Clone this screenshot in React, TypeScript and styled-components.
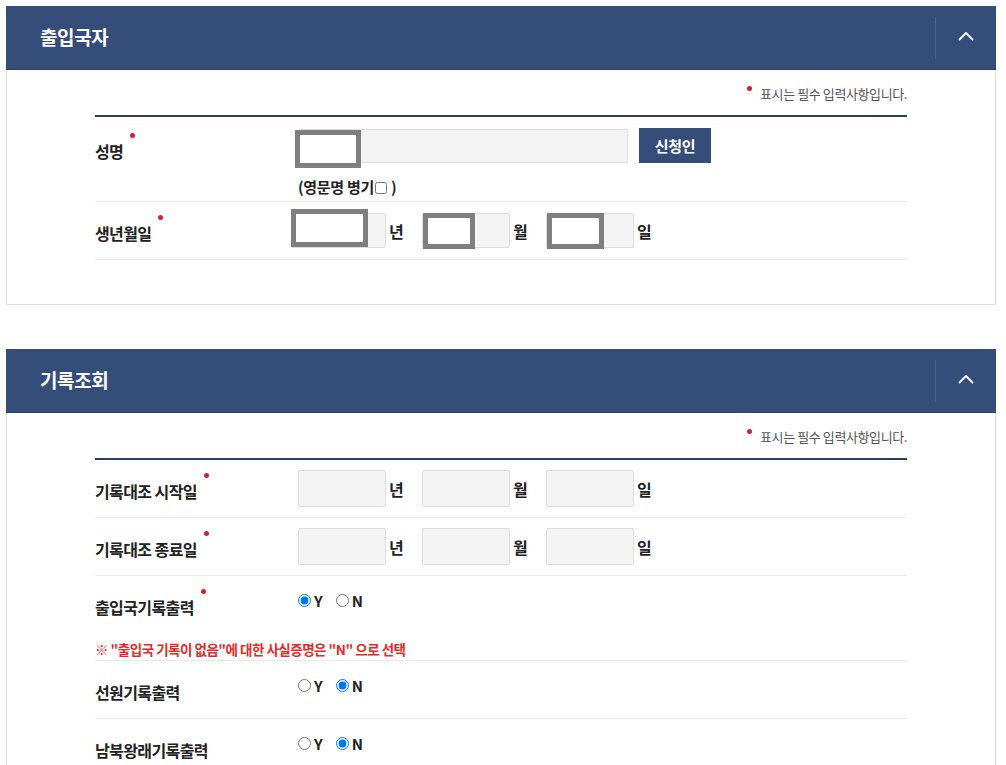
import styled, { createGlobalStyle } from 'styled-components';

const GlobalStyle = createGlobalStyle`
    html, body {
        margin: 0;
        padding: 0;
        background: #ffffff;
    }
    body {
        font-family: "Noto Sans CJK KR", "Noto Sans", sans-serif;
        color: #222;
    }
`;

const Page = styled.div`
    padding: 6px 10px 0 6px;
`;

const Section = styled.section`
    margin-bottom: 44px;
`;

const Header = styled.div`
    height: 64px;
    background-color: #344d79;
    border-bottom: 1px solid #2c426a;
    box-sizing: border-box;
    display: flex;
    align-items: center;
    justify-content: space-between;
    padding-left: 34px;
`;

const HeaderTitle = styled.h2`
    margin: 0 0 3px 0;
    color: #ffffff;
    font-size: 19px;
    font-weight: 700;
    letter-spacing: -0.4px;
`;

const ToggleButton = styled.button`
    width: 61px;
    height: 42px;
    border: none;
    border-left: 1px solid #4a6290;
    background: none;
    display: flex;
    align-items: center;
    justify-content: center;
    cursor: pointer;
    padding: 0 0 4px 0;
`;

const Body = styled.div`
    border: 1px solid #dddddd;
    border-top: none;
    padding: 13px 88px 44px 88px;
`;

const RequiredNote = styled.p`
    margin: 0 0 10px 0;
    text-align: right;
    font-size: 13px;
    line-height: 22px;
    letter-spacing: -0.4px;
    color: #555555;
`;

const Dot = styled.span`
    display: inline-block;
    width: 5px;
    height: 5px;
    border-radius: 50%;
    background-color: #d3202f;
    vertical-align: top;
`;

const NoteDot = styled(Dot)`
    margin: 3px 8px 0 0;
`;

const FormTable = styled.div`
    border-top: 2px solid #2c3d5f;
`;

const Row = styled.div`
    border-bottom: 1px solid #e8e8e8;
`;

const FieldLine = styled.div<{ $pad?: number; $top?: boolean }>`
    display: flex;
    align-items: ${props => (props.$top ? 'flex-start' : 'center')};
    min-height: 57px;
    padding: ${props => props.$pad ?? 0}px 0;
    box-sizing: border-box;
`;

const Label = styled.div<{ $offset?: number }>`
    width: 203px;
    flex-shrink: 0;
    font-size: 16px;
    font-weight: 700;
    letter-spacing: -0.6px;
    color: #222;
    padding-top: ${props => props.$offset ?? 5}px;
`;

const LabelDot = styled(Dot)`
    margin: -6px 0 0 7px;
`;

const Field = styled.div`
    display: flex;
    flex-direction: column;
`;

const InputLine = styled.div`
    display: flex;
    align-items: center;
`;

const Box = styled.div`
    position: relative;
    display: flex;
`;

const TextInput = styled.input<{ $w: number; $h: number }>`
    width: ${props => props.$w}px;
    height: ${props => props.$h}px;
    box-sizing: border-box;
    border: 1px solid #dddddd;
    border-radius: 2px;
    background-color: #f4f4f4;
    padding: 0 8px;
    font-family: inherit;
    font-size: 14px;
    outline: none;
`;

const Mark = styled.span<{ $x: number; $y: number; $w: number; $h: number }>`
    position: absolute;
    left: ${props => props.$x}px;
    top: ${props => props.$y}px;
    width: ${props => props.$w}px;
    height: ${props => props.$h}px;
    box-sizing: border-box;
    border: 5px solid #7f7f7f;
    background: #ffffff;
    pointer-events: none;
`;

const Unit = styled.span`
    font-size: 16px;
    font-weight: 700;
    color: #222;
    margin: 0 17px 0 3px;
    min-width: 16px;
`;

const PrimaryButton = styled.button`
    height: 35px;
    width: 72px;
    margin-left: 11px;
    border: none;
    background-color: #344d79;
    color: #ffffff;
    font-family: inherit;
    font-size: 15px;
    font-weight: 700;
    letter-spacing: -0.3px;
    cursor: pointer;
`;

const SubText = styled.label`
    display: flex;
    align-items: center;
    margin-top: 14px;
    font-size: 15px;
    font-weight: 700;
    line-height: 20px;
    letter-spacing: -0.3px;
    color: #222;
`;

const Check = styled.input`
    width: 12px;
    height: 12px;
    margin: 2px 4px 0 1px;
`;

const RadioGroup = styled.div`
    display: flex;
    align-items: center;
    gap: 13px;
    padding-bottom: 8px;
`;

const RadioOption = styled.label`
    display: flex;
    align-items: center;
    font-size: 15px;
    font-weight: 700;
    color: #222;
`;

const Radio = styled.input`
    width: 13px;
    height: 13px;
    margin: 0 3px 0 0;
`;

const WarnNote = styled.p`
    margin: 6px 0 0 0;
    padding-bottom: 1px;
    font-size: 13.5px;
    font-weight: 700;
    line-height: 20px;
    letter-spacing: -0.5px;
    color: #e3292a;
`;

const ChevronUp = () => (
    <svg width="16" height="10" viewBox="0 0 16 10" fill="none">
        <path d="M1.5 8.5L8 2L14.5 8.5" stroke="#ffffff" strokeWidth="1.8" strokeLinecap="round" strokeLinejoin="round" />
    </svg>
);

interface PanelProps {
    title: string;
    children: React.ReactNode;
}

const Panel = ({ title, children }: PanelProps) => (
    <Section>
        <Header>
            <HeaderTitle>{title}</HeaderTitle>
            <ToggleButton aria-label="접기">
                <ChevronUp />
            </ToggleButton>
        </Header>
        <Body>
            <RequiredNote>
                <NoteDot />
                표시는 필수 입력사항입니다.
            </RequiredNote>
            <FormTable>{children}</FormTable>
        </Body>
    </Section>
);

const Required = ({ text, offset }: { text: string; offset?: number }) => (
    <Label $offset={offset}>
        {text}
        <LabelDot />
    </Label>
);

const DateInputs = ({ h, marks }: { h: number; marks?: boolean }) => (
    <InputLine>
        <Box>
            <TextInput $w={marks ? 95 : 88} $h={h} style={marks ? { marginLeft: -7 } : undefined} />
            {marks && <Mark $x={-7} $y={-4} $w={77} $h={38} />}
        </Box>
        <Unit>년</Unit>
        <Box>
            <TextInput $w={88} $h={h} />
            {marks && <Mark $x={1} $y={0} $w={52} $h={36} />}
        </Box>
        <Unit>월</Unit>
        <Box>
            <TextInput $w={88} $h={h} />
            {marks && <Mark $x={1} $y={0} $w={57} $h={36} />}
        </Box>
        <Unit>일</Unit>
    </InputLine>
);

interface YesNoProps {
    name: string;
    value: 'Y' | 'N';
}

const YesNo = ({ name, value }: YesNoProps) => (
    <RadioGroup>
        <RadioOption>
            <Radio type="radio" name={name} defaultChecked={value === 'Y'} />
            Y
        </RadioOption>
        <RadioOption>
            <Radio type="radio" name={name} defaultChecked={value === 'N'} />
            N
        </RadioOption>
    </RadioGroup>
);

const App = () => {
    return (
        <>
            <GlobalStyle />
            <Page>
                {/* 출입국자 */}
                <Panel title="출입국자">
                    <Row>
                        <FieldLine $pad={11} $top style={{ paddingBottom: 4 }}>
                            <Required text="성명" offset={11} />
                            <Field>
                                <InputLine>
                                    <Box>
                                        <TextInput $w={330} $h={34} />
                                        <Mark $x={-3} $y={1} $w={66} $h={38} />
                                    </Box>
                                    <PrimaryButton>신청인</PrimaryButton>
                                </InputLine>
                                <SubText>
                                    (영문명 병기
                                    <Check type="checkbox" />)
                                </SubText>
                            </Field>
                        </FieldLine>
                    </Row>
                    <Row>
                        <FieldLine $pad={11}>
                            <Required text="생년월일" />
                            <DateInputs h={35} marks />
                        </FieldLine>
                    </Row>
                </Panel>

                {/* 기록조회 */}
                <Panel title="기록조회">
                    <Row>
                        <FieldLine $pad={10}>
                            <Required text="기록대조 시작일" />
                            <DateInputs h={37} />
                        </FieldLine>
                    </Row>
                    <Row>
                        <FieldLine $pad={10}>
                            <Required text="기록대조 종료일" />
                            <DateInputs h={37} />
                        </FieldLine>
                    </Row>
                    <Row>
                        <FieldLine>
                            <Required text="출입국기록출력" />
                            <YesNo name="immigration" value="Y" />
                        </FieldLine>
                        <WarnNote>※ "출입국 기록이 없음"에 대한 사실증명은 "N" 으로 선택</WarnNote>
                    </Row>
                    <Row>
                        <FieldLine>
                            <Label>선원기록출력</Label>
                            <YesNo name="seaman" value="N" />
                        </FieldLine>
                    </Row>
                    <Row>
                        <FieldLine>
                            <Label>남북왕래기록출력</Label>
                            <YesNo name="northsouth" value="N" />
                        </FieldLine>
                    </Row>
                </Panel>
            </Page>
        </>
    );
};

export default App;
